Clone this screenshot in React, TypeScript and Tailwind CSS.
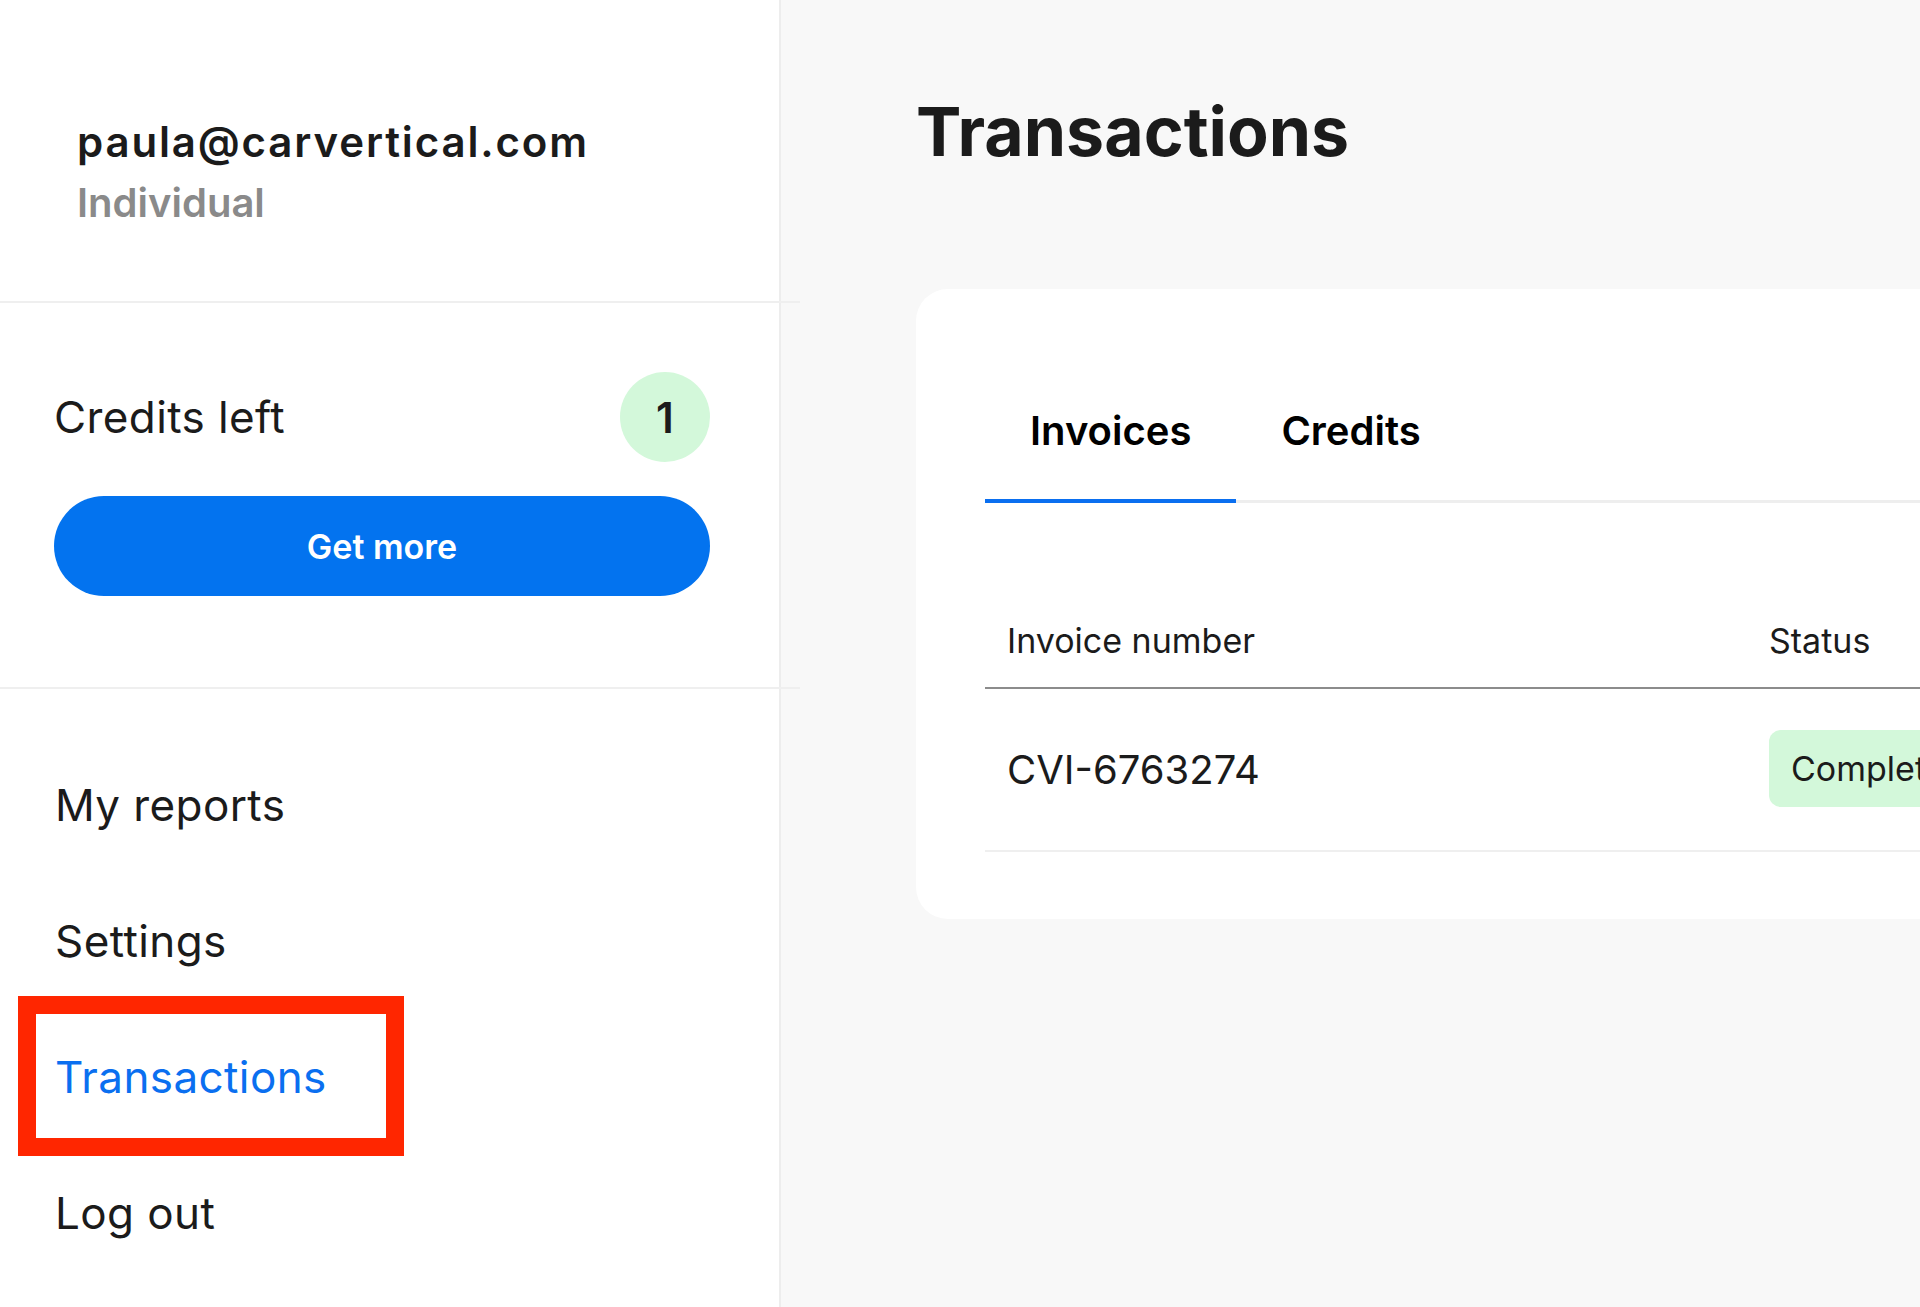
import React from "react";

export default function App() {
  return (
    <div className="flex h-[1307px] w-[1920px] overflow-hidden bg-[#f8f8f8] font-['Inter',sans-serif] text-[#1b1b1b]">
      {/* Sidebar */}
      <aside className="relative w-[781px] shrink-0 border-r-2 border-[#ededed] bg-white">
        <div className="h-[301px] pl-[77px] pt-[118px]">
          <div className="text-[42px] font-semibold leading-[48px] tracking-[1.85px]">paula@carvertical.com</div>
          <div className="mt-[13px] text-[40px] font-semibold leading-[48px] text-[#8a8a8a]">Individual</div>
        </div>
        <div className="relative z-10 h-[2px] w-[800px] bg-[#efefef]" />
        <div className="pb-[91px] pl-[54px] pr-[69px] pt-[69px]">
          <div className="flex h-[90px] items-center justify-between">
            <span className="text-[44px] leading-[48px] tracking-[0.4px]">Credits left</span>
            <span className="flex h-[90px] w-[90px] items-center justify-center rounded-full bg-[#d3f8da] text-[42px] font-semibold">1</span>
          </div>
          <button className="mt-[34px] flex h-[100px] w-full items-center justify-center rounded-full bg-[#0373ef] text-[34px] font-semibold text-white">
            Get more
          </button>
        </div>
        <div className="relative z-10 h-[2px] w-[800px] bg-[#efefef]" />
        <nav className="flex flex-col gap-[88px] pl-[55px] pt-[92px] text-[44px] leading-[48px] tracking-[0.4px]">
          <span>My reports</span>
          <span>Settings</span>
          <span className="text-[#0a6ff0]">Transactions</span>
          <span>Log out</span>
        </nav>
        {/* annotation box */}
        <div className="pointer-events-none absolute left-[18px] top-[996px] h-[160px] w-[386px] border-[18px] border-[#ff2600]" />
      </aside>

      {/* Main */}
      <main className="min-w-0 flex-1 pl-[135px] pt-[93px]">
        <h1 className="text-[68px] font-bold leading-[77px]">Transactions</h1>
        <div className="mt-[119px] w-[1200px] rounded-[32px] bg-white px-[69px] pb-[67px] pt-[70px]">
          <div className="flex border-b-[3px] border-[#eeeeee]">
            <div className="-mb-[3px] border-b-4 border-[#0a6ff0] px-[45px] pb-[44px] pt-[48px] text-[40px] font-semibold leading-[48px] text-black">
              Invoices
            </div>
            <div className="px-[45px] pb-[44px] pt-[48px] text-[40px] font-semibold leading-[48px] text-black">Credits</div>
          </div>
          <div className="mt-[118px] flex border-b-2 border-[#8c8c8c] pb-[26px] text-[34px] leading-[40px]">
            <div className="w-[762px] px-[22px]">Invoice number</div>
            <div className="px-[22px]">Status</div>
          </div>
          <div className="flex items-center border-b-2 border-[#efefef] py-[42px]">
            <div className="w-[762px] px-[22px] text-[40px] leading-[48px]">CVI-6763274</div>
            <div className="px-[22px]">
              <span className="inline-flex h-[77px] -translate-y-[1px] items-center rounded-[12px] bg-[#d3f8da] px-[22px] text-[34px] leading-[48px]">Completed</span>
            </div>
          </div>
        </div>
      </main>
    </div>
  );
}
